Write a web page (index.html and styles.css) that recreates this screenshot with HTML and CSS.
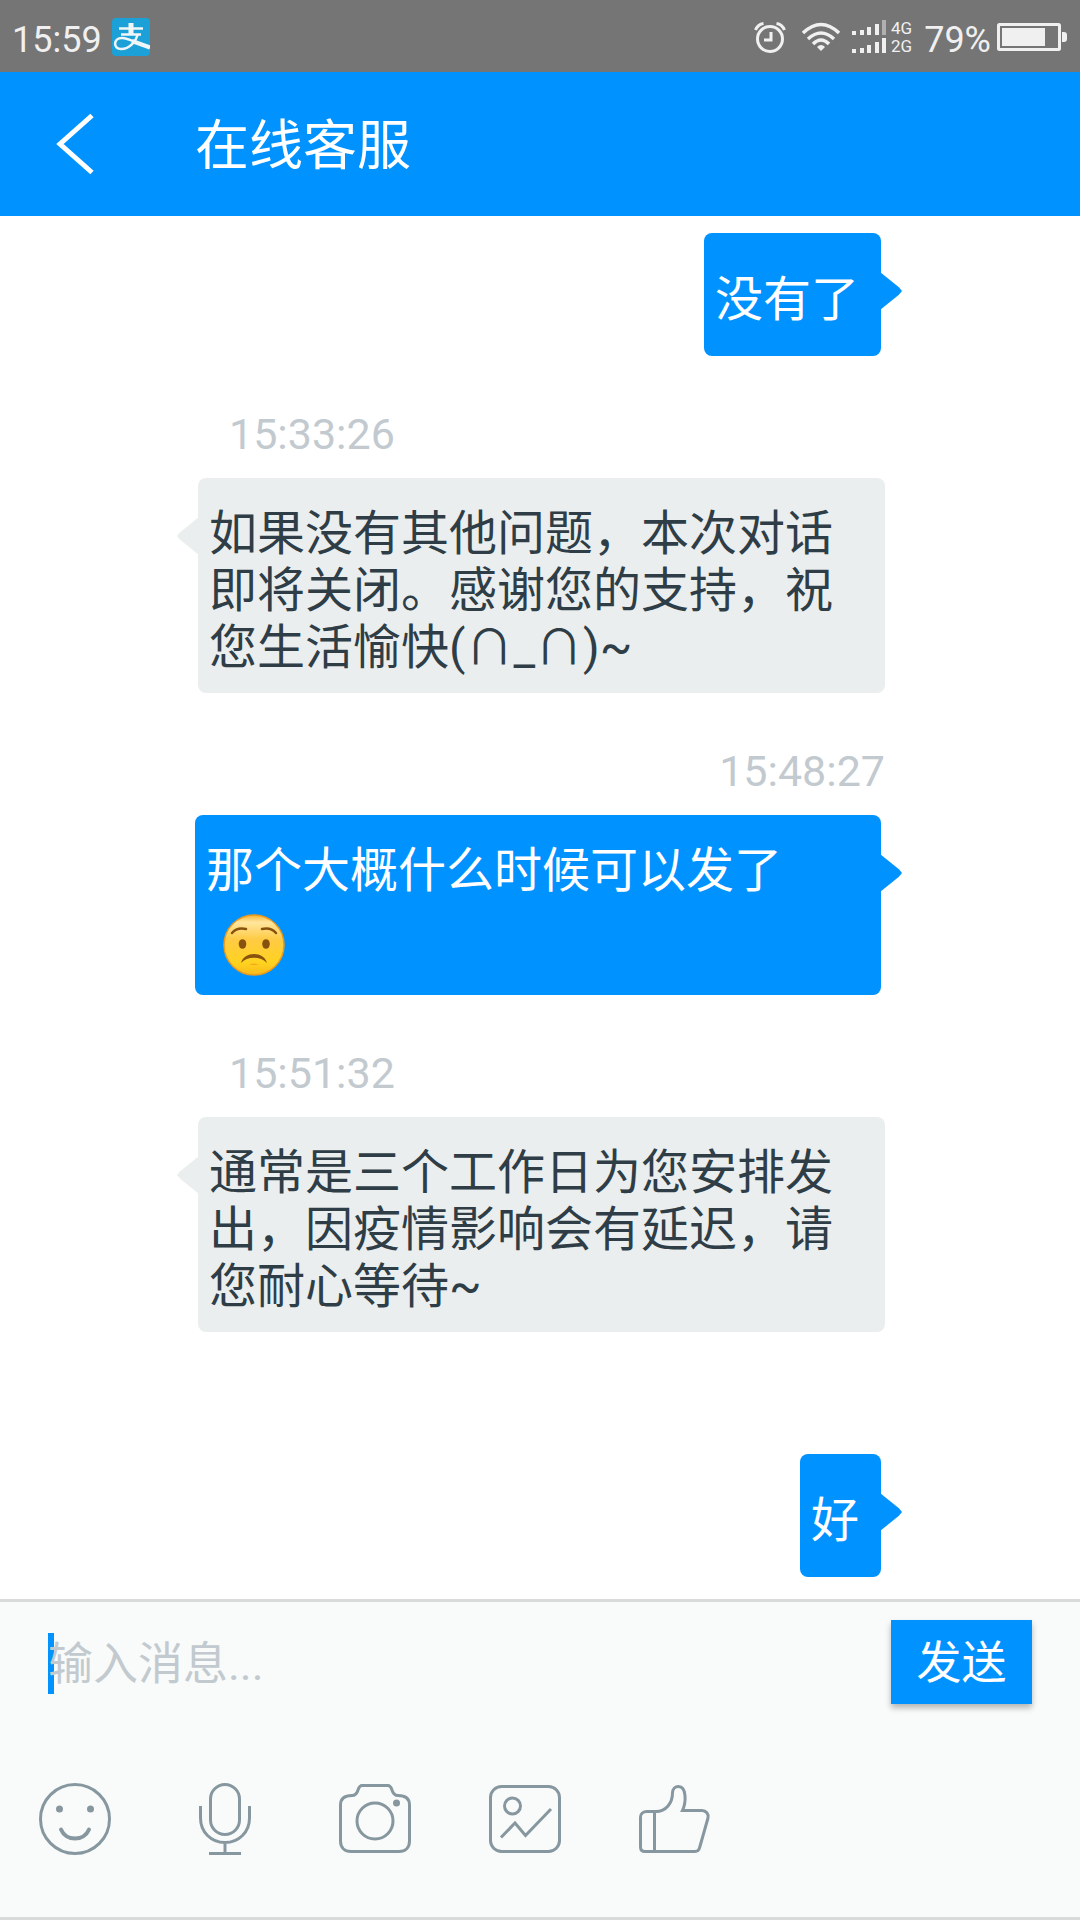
FILE: index.html
```html
<!DOCTYPE html>
<html lang="zh-CN">
<head>
<meta charset="utf-8">
<meta name="viewport" content="width=device-width, initial-scale=1">
<title>在线客服</title>
<link rel="stylesheet" href="styles.css">
</head>
<body>
<div class="status-bar">
  <span>15:59</span>
  <svg class="app-badge" width="38" height="38" viewBox="0 0 38 38" aria-hidden="true">
    <rect width="38" height="38" rx="4" fill="#1ba1d8"/>
    <g fill="none" stroke="#f0f6f8">
      <path d="M7 10.500H31M9 16.500H29" stroke-width="2.500"/>
      <path d="M19 5V16" stroke-width="5"/>
      <path d="M26 16C24 23 18 31 9 31C1 31 1 20 10 20C18 20 26 27 38 29" stroke-width="2.500"/>
      <path d="M20 23L38 29.500" stroke-width="4"/>
    </g>
  </svg>
  <div class="indicators">
    <svg width="32" height="32" viewBox="0 0 32 32" aria-hidden="true">
      <g fill="none" stroke="#f0f0f0" stroke-width="3">
        <circle cx="16" cy="18" r="12.500"/>
        <path d="M17 11V19H10"/>
        <path d="M1.500 9C3 5.500 6 3 9.500 2.500M30.500 9C29 5.500 26 3 22.500 2.500"/>
      </g>
    </svg>
    <svg class="wifi" width="38" height="30" viewBox="0 0 38 30" aria-hidden="true">
      <g fill="none" stroke="#f0f0f0" stroke-width="3.500">
        <path d="M1 11Q19 -6 37 11"/>
        <path d="M6 17Q19 5 32 17"/>
        <path d="M11 22Q19 14 27 22"/>
      </g>
      <path d="M15 25Q19 21 23 25L19 29Z" fill="#f0f0f0"/>
    </svg>
    <svg class="signal" width="34" height="34" viewBox="0 0 34 34" fill="#f0f0f0" aria-hidden="true">
      <path d="M0 11h4v4H0zM8 10h4v5H8zM15 7h4v8h-4zM23 4h4v11h-4z"/>
      <path d="M30 0h4v15h-4z" fill="#b0b0b0"/>
      <path d="M0 29h4v4H0zM8 28h4v5H8zM15 25h4v8h-4zM23 22h4v11h-4zM30 18h4v15h-4z"/>
    </svg>
    <span class="networks"><span>4G</span><span>2G</span></span>
    <span class="charge">79%</span>
    <svg class="battery" width="70" height="28" viewBox="0 0 70 28" aria-hidden="true">
      <rect x="1.500" y="1.500" width="61" height="25" rx="1" fill="none" stroke="#f0f0f0" stroke-width="3"/>
      <path d="M5 5h43v18H5zM65 9h2q3 0 3 3v4q0 3-3 3h-2z" fill="#f0f0f0"/>
    </svg>
  </div>
</div>

<header class="app-header">
  <button class="back" type="button" aria-label="返回">
    <svg width="40" height="62" viewBox="0 0 40 62" aria-hidden="true"><path d="M36 2.500L4 31L36 59.500" fill="none" stroke="#fff" stroke-width="5"/></svg>
  </button>
  <h1>在线客服</h1>
</header>

<main class="messages">
  <article class="message outgoing">
    <p class="bubble"><span>没有了</span></p>
  </article>
  <article class="message incoming">
    <time>15:33:26</time>
    <p class="bubble"><span>如果没有其他问题，本次对话即将关闭。感谢您的支持，祝您生活愉快(∩_∩)~</span></p>
  </article>
  <article class="message outgoing">
    <time>15:48:27</time>
    <p class="bubble"><span>那个大概什么时候可以发了<svg class="emoji" width="62" height="62" viewBox="0 0 62 62" role="img" aria-label="担心">
      <defs>
        <linearGradient id="face" x1="0" y1="0" x2="0" y2="1">
          <stop offset="0" stop-color="#f7b32c"/><stop offset=".12" stop-color="#ffe6a0"/><stop offset=".4" stop-color="#ffcb45"/><stop offset=".8" stop-color="#ffd21f"/><stop offset="1" stop-color="#f9b91c"/>
        </linearGradient>
      </defs>
      <circle cx="31" cy="31" r="30" fill="url(#face)" stroke="#e99a1e" stroke-width="1.500"/>
      <g fill="#87520e"><ellipse cx="19.500" cy="30" rx="3.800" ry="4.800"/><ellipse cx="43" cy="30" rx="3.800" ry="4.800"/>
      <path d="M18 49C21 37 41 37 44 49C38 42 24 42 18 49Z"/></g>
      <path d="M9 19Q14 13 23 15M53 19Q48 13 39 15" fill="none" stroke="#87520e" stroke-width="2.500" stroke-linecap="round"/>
      <path d="M26 51Q31 48 36 51Z" fill="#f9a51c"/>
    </svg></span></p>
  </article>
  <article class="message incoming">
    <time>15:51:32</time>
    <p class="bubble"><span>通常是三个工作日为您安排发出，因疫情影响会有延迟，请您耐心等待~</span></p>
  </article>
  <article class="message outgoing">
    <time></time>
    <p class="bubble"><span>好</span></p>
  </article>
</main>

<form class="composer">
  <div class="entry">
    <input type="text" aria-label="输入消息" placeholder="输入消息...">
    <button class="send" type="button">发送</button>
  </div>
  <div class="tools">
    <button type="button" aria-label="表情">
      <svg width="72" height="72" viewBox="0 0 72 72"><circle cx="36" cy="36" r="34.500"/><path class="thick" d="M22 46.500C27 58.500 45 58.500 50 46.500"/><circle class="dot" cx="20.500" cy="26" r="3.500"/><circle class="dot" cx="51.500" cy="26" r="3.500"/></svg>
    </button>
    <button type="button" aria-label="语音">
      <svg width="72" height="72" viewBox="0 0 72 72"><rect x="21.500" y="1.500" width="29" height="50" rx="14.500"/><path d="M11.500 23V35C11.500 49 22 59.500 36 59.500S60.500 49 60.500 35V23M36 60V70M20 70.500H52"/></svg>
    </button>
    <button type="button" aria-label="拍照">
      <svg width="72" height="72" viewBox="0 0 72 72"><path d="M23 2.500H49C51 2.500 52 4 53 7C54 10.500 55.500 12.500 59 12.500C67 12.500 70.500 16 70.500 22V58C70.500 64.500 66.500 68.500 60 68.500H12C5.500 68.500 1.500 64.500 1.500 58V22C1.500 16 5 12.500 13 12.500C16.500 12.500 18 10.500 19 7C20 4 21 2.500 23 2.500Z"/><circle cx="36" cy="38" r="18"/><circle class="dot" cx="57.500" cy="20" r="3.500"/></svg>
    </button>
    <button type="button" aria-label="图片">
      <svg width="72" height="72" viewBox="0 0 72 72"><rect x="1.500" y="3.500" width="69" height="65" rx="11"/><circle cx="23.500" cy="23" r="8"/><path d="M12 54.500L26 40L36.500 52.500L62 26"/></svg>
    </button>
    <button type="button" aria-label="点赞">
      <svg width="72" height="72" viewBox="0 0 72 72"><path d="M6 68.500H56C59 68.500 60 67 60.500 65L69 35C70 31 67 27.500 63 27.500H43.500C47 20 48 3.500 39.500 3.500C36 3.500 33.500 6 33.500 10C33.500 20 27 28.500 17 28.500H8C4 28.500 1.500 31 1.500 34V64C1.500 67 3 68.500 6 68.500ZM15.500 29V68"/></svg>
    </button>
  </div>
</form>
</body>
</html>
```
FILE: styles.css
```css
* {
  box-sizing: border-box;
}

body {
  margin: 0;
  min-height: 100vh;
  display: flex;
  flex-direction: column;
  background: #fff;
  font-family: Roboto, "Noto Sans CJK SC", sans-serif;
}

h1,
p {
  margin: 0;
  font-weight: 400;
}

button,
input {
  margin: 0;
  padding: 0;
  border: 0;
  font: inherit;
}

svg {
  display: block;
  flex: none;
}

/* System status bar */
.status-bar {
  display: flex;
  align-items: center;
  height: 72px;
  padding: 2px 13px 0 12px;
  background: #757575;
  color: #f0f0f0;
  font-size: 36px;
  line-height: 44px;
}

.status-bar > span {
  padding-top: 6px;
}

.app-badge {
  margin-left: 10px;
}

.indicators {
  display: flex;
  align-items: center;
  margin-left: auto;
}

.wifi {
  margin-left: 16px;
}

.signal {
  margin-left: 12px;
}

.networks {
  display: flex;
  flex-direction: column;
  margin: 0 12px 0 5px;
  font-size: 17px;
  line-height: 18px;
}

.charge {
  padding-top: 6px;
}

.battery {
  margin-left: 6px;
}

/* Title bar */
.app-header {
  display: flex;
  align-items: center;
  height: 144px;
  background: #0092ff;
  color: #fff;
}

.back {
  display: flex;
  align-items: center;
  width: 195px;
  height: 144px;
  padding-left: 56px;
  background: none;
}

.app-header h1 {
  padding-top: 6px;
  font-size: 54px;
  line-height: 72px;
}

/* Conversation */
.messages {
  flex: 1;
  padding: 17px 0 22px;
}

.message {
  display: flex;
  flex-direction: column;
  align-items: flex-start;
  padding: 0 195px 0 198px;
}

.message.outgoing {
  align-items: flex-end;
  padding: 0 199px 0 195px;
}

.message time {
  height: 50px;
  margin: 53px 0 19px 31px;
  color: #c2cacf;
  font-size: 43px;
  line-height: 50px;
}

.outgoing time {
  margin-right: -4px;
}

.bubble {
  position: relative;
  display: grid;
  align-items: center;
  min-height: 123px;
  padding: 27px 22px 17px 11px;
  border-radius: 8px;
  background: #ebeeef;
  color: #2f3e46;
  font-size: 48px;
  line-height: 57px;
}

.outgoing .bubble {
  background: #0092ff;
  color: #fff;
}

.bubble::before {
  content: "";
  position: absolute;
  top: 39px;
  left: -21px;
  width: 22px;
  height: 38px;
  background: inherit;
  clip-path: polygon(100% 0, 14% 40%, 0 50%, 14% 60%, 100% 100%);
}

.outgoing .bubble::before {
  left: auto;
  right: -21px;
  clip-path: polygon(0 0, 86% 40%, 100% 50%, 86% 60%, 0 100%);
}

.emoji {
  display: inline-block;
  margin: 15px 17px 2px;
  vertical-align: top;
}

/* Composer */
.composer {
  border-top: 3px solid #d9dbda;
  border-bottom: 3px solid #d9dbda;
  background: #f9fbfa;
}

.entry {
  display: flex;
  align-items: center;
  padding: 18px 48px 0;
}

.entry input {
  flex: 1;
  min-width: 0;
  height: 64px;
  padding-top: 4px;
  background: linear-gradient(#0092ff, #0092ff) left bottom / 6px 61px no-repeat;
  color: #2f3e46;
  font-size: 45px;
  line-height: 60px;
  outline: 0;
}

.entry input::placeholder {
  color: #c2cacf;
  opacity: 1;
}

.send {
  width: 141px;
  height: 84px;
  padding-top: 3px;
  background: #0092ff;
  box-shadow: 0 4px 6px rgba(0, 0, 0, 0.28);
  color: #fff;
  font-size: 45px;
  line-height: 60px;
}

.tools {
  display: flex;
  padding: 40px 0 23px;
}

.tools button {
  display: grid;
  place-items: center;
  width: 150px;
  height: 150px;
  background: none;
}

.tools svg {
  fill: none;
  stroke: #87979f;
  stroke-width: 3;
}

.tools .thick {
  stroke-width: 4;
  stroke-linecap: round;
}

.tools .dot {
  fill: #87979f;
  stroke: none;
}
```
